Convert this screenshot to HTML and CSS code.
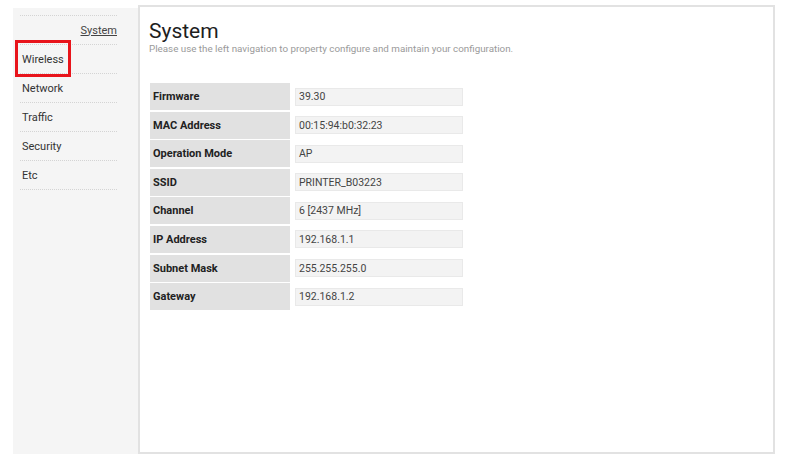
FILE: index.html
```html
<!DOCTYPE html>
<html>
<head>
<meta charset="utf-8">
<link rel="stylesheet" href="styles.css">
</head>
<body>
<div class="page">
  <aside class="sidebar">
    <ul class="nav">
      <li class="nav-item nav-current"><a>System</a></li>
      <li class="nav-item nav-hl"><a>Wireless</a></li>
      <li class="nav-item"><a>Network</a></li>
      <li class="nav-item"><a>Traffic</a></li>
      <li class="nav-item"><a>Security</a></li>
      <li class="nav-item"><a>Etc</a></li>
    </ul>
  </aside>
  <main class="panel">
    <h1 class="title">System</h1>
    <p class="subtitle">Please use the left navigation to property configure and maintain your configuration.</p>
    <div class="info">
      <div class="label">Firmware</div><div class="value-wrap"><div class="value">39.30</div></div>
      <div class="label">MAC Address</div><div class="value-wrap"><div class="value">00:15:94:b0:32:23</div></div>
      <div class="label">Operation Mode</div><div class="value-wrap"><div class="value">AP</div></div>
      <div class="label">SSID</div><div class="value-wrap"><div class="value">PRINTER_B03223</div></div>
      <div class="label">Channel</div><div class="value-wrap"><div class="value">6 [2437 MHz]</div></div>
      <div class="label">IP Address</div><div class="value-wrap"><div class="value">192.168.1.1</div></div>
      <div class="label">Subnet Mask</div><div class="value-wrap"><div class="value">255.255.255.0</div></div>
      <div class="label">Gateway</div><div class="value-wrap"><div class="value">192.168.1.2</div></div>
    </div>
  </main>
</div>
</body>
</html>
```

FILE: styles.css
```css
html, body {
  margin: 0;
  padding: 0;
  background: #ffffff;
  font-family: Roboto, "Liberation Sans", Arial, sans-serif;
}

.page {
  display: flex;
  align-items: stretch;
  padding: 5px 0 0 13px;
  width: 762px;
  height: 449px;
}

.sidebar {
  width: 125px;
  margin-top: 3px;
  background: #f5f5f5;
  padding: 7px 0 0 0;
  position: relative;
}

.nav {
  list-style: none;
  margin: 0 21px 0 7px;
  padding: 0;
  border-top: 1px dotted #d4d4d4;
}

.nav-item {
  height: 28px;
  border-bottom: 1px dotted #d4d4d4;
  display: flex;
  align-items: center;
  padding-left: 2px;
  font-size: 11px;
  color: #333333;
}

.nav-current {
  justify-content: flex-end;
  padding-left: 0;
}

.nav-current a {
  text-decoration: underline;
  color: #444444;
}

.nav-hl {
  position: relative;
}

.nav-hl::before {
  content: "";
  position: absolute;
  left: -5px;
  top: -5px;
  width: 50px;
  height: 31px;
  border: 3px solid #e8141b;
}

.panel {
  flex: 1;
  border: 2px solid #e2e2e2;
  background: #ffffff;
  padding: 12px 0 0 9px;
}

.title {
  margin: 0;
  font-size: 21px;
  font-weight: 400;
  color: #1e1e1e;
  line-height: 24px;
}

.subtitle {
  margin: 0;
  font-size: 9.8px;
  color: #9a9a9a;
  line-height: 11px;
}

.info {
  display: grid;
  grid-template-columns: 140px 173px;
  grid-auto-rows: 27px;
  row-gap: 1.6px;
  margin: 29px 0 0 1px;
}

.label {
  background: #e1e1e1;
  display: flex;
  align-items: center;
  padding-left: 3px;
  font-size: 11px;
  font-weight: 700;
  color: #222222;
}

.value-wrap {
  display: flex;
  align-items: center;
  padding-left: 5px;
}

.value {
  flex: 1;
  height: 16px;
  background: #f3f3f3;
  border: 1px solid #e9e9e9;
  display: flex;
  align-items: center;
  padding-left: 3px;
  font-size: 10.5px;
  color: #444444;
}
```
